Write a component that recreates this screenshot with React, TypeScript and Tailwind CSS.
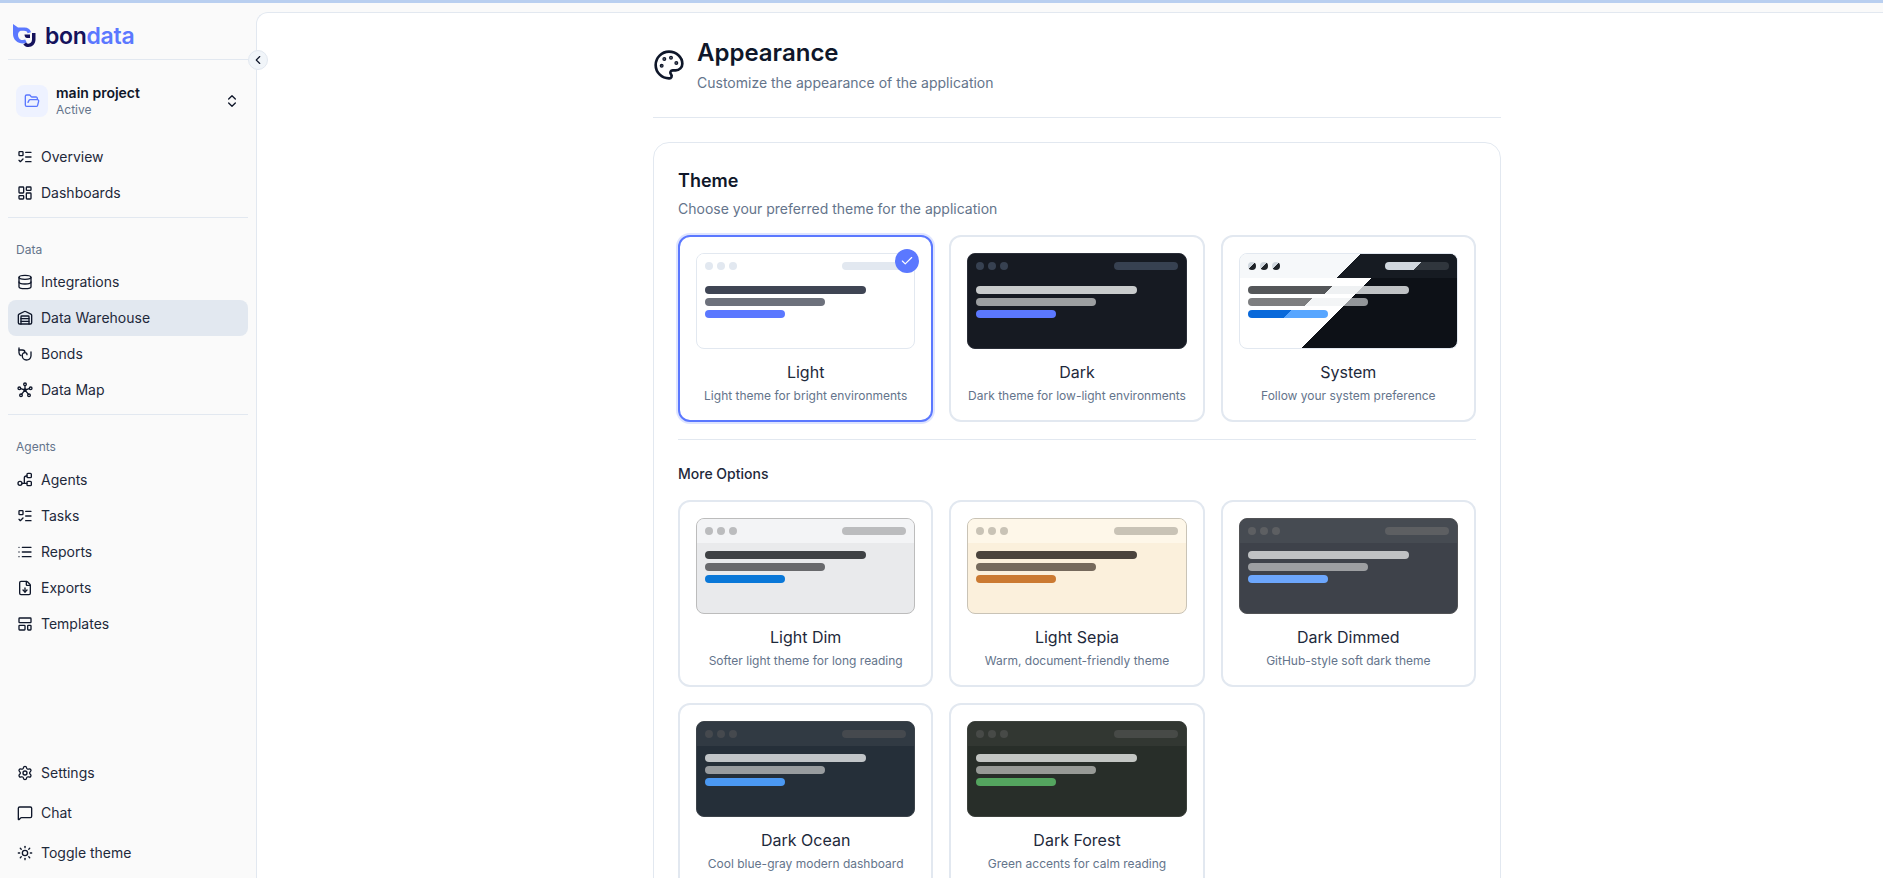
import {
  Check,
  ChevronLeft,
  ChevronsUpDown,
  Database,
  FileDown,
  FolderOpen,
  LayoutDashboard,
  LayoutTemplate,
  List,
  ListTodo,
  MessageSquare,
  Palette,
  Settings,
  Sun,
  Warehouse,
} from "lucide-react";
import type { ComponentType, ReactNode } from "react";

type IconProps = { size?: number; strokeWidth?: number; className?: string };

function BondsIcon({ size = 16, strokeWidth = 2 }: IconProps) {
  return (
    <svg width={size} height={size} viewBox="0 0 24 24" fill="none" stroke="currentColor" strokeWidth={strokeWidth} strokeLinecap="round" strokeLinejoin="round">
      <path d="M3 3v7a5 5 0 0 0 3 4.5" />
      <path d="M3 6h5a4 4 0 0 1 4 4" />
      <path d="M21 9v6a7 7 0 0 1-7 6 6 6 0 0 1-6-6 4 4 0 0 1 4-5c2 0 3 1 3 3" />
    </svg>
  );
}

function DataMapIcon({ size = 16, strokeWidth = 2 }: IconProps) {
  return (
    <svg width={size} height={size} viewBox="0 0 24 24" fill="none" stroke="currentColor" strokeWidth={strokeWidth} strokeLinecap="round">
      <circle cx="12" cy="3.5" r="2" />
      <circle cx="3.5" cy="9.5" r="2" />
      <circle cx="20.5" cy="9.5" r="2" />
      <circle cx="6" cy="20" r="2" />
      <circle cx="18" cy="20" r="2" />
      <circle cx="12" cy="12" r="1.5" fill="currentColor" />
      <path d="M12 5.5V12M5.5 10l6.5 2 6.5-2M7 18.3l5-6.3 5 6.3" />
    </svg>
  );
}

function AgentsIcon({ size = 16, strokeWidth = 2 }: IconProps) {
  return (
    <svg width={size} height={size} viewBox="0 0 24 24" fill="none" stroke="currentColor" strokeWidth={strokeWidth} strokeLinecap="round" strokeLinejoin="round">
      <circle cx="4.5" cy="17" r="3" />
      <rect x="15" y="2" width="6.5" height="6.5" rx="1.5" />
      <rect x="15" y="14" width="6.5" height="6.5" rx="1.5" />
      <path d="M7.5 17H15M11 17v-8a3 3 0 0 1 3-3h1" />
    </svg>
  );
}

function Logo() {
  return (
    <svg width="24" height="24" viewBox="0 0 24 24" fill="none">
      <path d="M0 0l5 3.6h6.5c3.4 0 5.5 1.6 6.5 4.6l-3.4 1C14 7.600 13 6.800 11 6.800H7.500a5 5 0 0 0 2.500 9.300c.8 0 1.500-.2 2.200-.5l1.500 3c-1.200.6-2.400.9-3.700.9C4.400 19.500 0 15.600 0 10z" fill="#5b78ff" />
      <path d="M22.500 9v6.500c0 4.500-3.200 7.500-7 7.500-2 0-4-.9-5.200-2.600l2.800-1.900c.6.800 1.400 1.200 2.400 1.200 1.900 0 3.500-1.600 3.500-4.100V9z" fill="#15125c" />
      <path d="M11.500 10.500h5.500v3.400h-3c-1.500 0-2.500-1.400-2.500-3.400z" fill="#15125c" />
    </svg>
  );
}

function NavItem({ icon: Icon, label, active }: { icon: ComponentType<IconProps>; label: string; active?: boolean }) {
  return (
    <div className={`flex h-9 items-center gap-[8px] rounded-lg px-[9px] text-sm text-[#1e293b] ${active ? "bg-[#e2e8f0]" : ""}`}>
      <span className="text-[#0f172a]">
        <Icon size={16} strokeWidth={2} />
      </span>
      <span>{label}</span>
    </div>
  );
}

function NavLabel({ children }: { children: ReactNode }) {
  return <div className="flex h-5 items-center px-2 text-xs text-[#64748b]">{children}</div>;
}

function Sidebar() {
  return (
    <aside className="flex h-full w-[256px] shrink-0 flex-col bg-[#fafafa] px-2">
      <div className="flex h-[57px] shrink-0 items-start gap-[8px] border-b border-[#e2e8f0] pl-[5px] pt-[21px]">
        <Logo />
        <span className="text-[23px] font-semibold leading-[24px] tracking-[-0.3px] text-[#15125c]">
          bon<span className="text-[#5b78ff]">data</span>
        </span>
      </div>
      <div className="mt-[24px] flex items-center px-2">
        <div className="flex size-8 items-center justify-center rounded-lg bg-[#eef2ff] text-[#5b78ff]">
          <FolderOpen size={16} />
        </div>
        <div className="ml-2 flex-1">
          <div className="text-[14px] font-semibold leading-[18px] text-[#0f172a]">main project</div>
          <div className="text-xs leading-[16px] text-[#64748b]">Active</div>
        </div>
        <ChevronsUpDown size={16} className="mr-0 text-[#0f172a]" />
      </div>
      <nav className="mt-[21px] flex flex-col">
        <NavItem icon={ListTodo} label="Overview" />
        <NavItem icon={LayoutDashboard} label="Dashboards" />
        <div className="mt-[6px] border-t border-[#e2e8f0]" />
        <div className="mt-[22px] flex flex-col">
          <NavLabel>Data</NavLabel>
          <div className="mt-1 flex flex-col">
            <NavItem icon={Database} label="Integrations" />
            <NavItem icon={Warehouse} label="Data Warehouse" active />
            <NavItem icon={BondsIcon} label="Bonds" />
            <NavItem icon={DataMapIcon} label="Data Map" />
          </div>
        </div>
        <div className="mt-[6px] border-t border-[#e2e8f0]" />
        <div className="mt-[22px] flex flex-col">
          <NavLabel>Agents</NavLabel>
          <div className="mt-[5px] flex flex-col">
            <NavItem icon={AgentsIcon} label="Agents" />
            <NavItem icon={ListTodo} label="Tasks" />
            <NavItem icon={List} label="Reports" />
            <NavItem icon={FileDown} label="Exports" />
            <NavItem icon={LayoutTemplate} label="Templates" />
          </div>
        </div>
      </nav>
      <div className="mt-auto mb-[7px] flex flex-col gap-1">
        <NavItem icon={Settings} label="Settings" />
        <NavItem icon={MessageSquare} label="Chat" />
        <NavItem icon={Sun} label="Toggle theme" />
      </div>
    </aside>
  );
}

type Skin = {
  frame: string;
  head: string;
  dot: string;
  pill: string;
  line1: string;
  line2: string;
  accent: string;
};

const skins: Record<string, Skin> = {
  light: { frame: "border-[#e2e8f0] bg-white", head: "bg-white", dot: "bg-[#e2e8f0]", pill: "bg-[#e2e8f0]", line1: "bg-[#3f4554]", line2: "bg-[#6d717c]", accent: "bg-[#5b78ff]" },
  dark: { frame: "border-[#2a2e38] bg-[#161a22]", head: "bg-[#161a22]", dot: "bg-[#374151]", pill: "bg-[#374151]", line1: "bg-[#c8cbcc]", line2: "bg-[#9c9fa1]", accent: "bg-[#5b78ff]" },
  system: {
    frame: "border-[#e2e8f0] bg-[linear-gradient(135deg,#ffffff_50%,#0d1117_50%)]",
    head: "bg-[linear-gradient(135deg,#f6f8fa_50%,#161b22_50%)]",
    dot: "bg-[linear-gradient(135deg,#d0d7de_50%,#1f2328_50%)]",
    pill: "bg-[linear-gradient(135deg,#d0d7de_50%,#30363d_50%)]",
    line1: "bg-[linear-gradient(135deg,#2a2d30_50%,#ebeef0_50%)] opacity-80",
    line2: "bg-[linear-gradient(135deg,#26282b_50%,#ebeef0_50%)] opacity-60",
    accent: "bg-[linear-gradient(135deg,#0969da_50%,#58a6ff_50%)]",
  },
  lightDim: { frame: "border-[#bcbcbc] bg-[#e9eaec]", head: "bg-[#f3f4f6]", dot: "bg-[#bbbcbe]", pill: "bg-[#bbbcbe]", line1: "bg-[#3e4144]", line2: "bg-[#68696c]", accent: "bg-[#0a78d8]" },
  sepia: { frame: "border-[#c9c3b6] bg-[#fbf0dc]", head: "bg-[#fef7e9]", dot: "bg-[#c9c3b6]", pill: "bg-[#c9c3b6]", line1: "bg-[#4a433c]", line2: "bg-[#75695c]", accent: "bg-[#cb7a32]" },
  dimmed: { frame: "border-[#525356] bg-[#3e424a]", head: "bg-[#464b52]", dot: "bg-[#5d5f62]", pill: "bg-[#5d5f62]", line1: "bg-[#c0c2c4]", line2: "bg-[#9d9fa2]", accent: "bg-[#6ca6fc]" },
  ocean: { frame: "border-[#3c434a] bg-[#252f39]", head: "bg-[#313a43]", dot: "bg-[#45494e]", pill: "bg-[#45494e]", line1: "bg-[#c1c5c8]", line2: "bg-[#989c9f]", accent: "bg-[#4b99f3]" },
  forest: { frame: "border-[#3d423d] bg-[#282e29]", head: "bg-[#323732]", dot: "bg-[#474a47]", pill: "bg-[#474a47]", line1: "bg-[#c3c6c3]", line2: "bg-[#979a96]", accent: "bg-[#54a55f]" },
};

function Preview({ skin }: { skin: Skin }) {
  return (
    <div className={`h-24 overflow-hidden rounded-lg border ${skin.frame}`}>
      <div className={`flex h-6 items-center justify-between px-2 ${skin.head}`}>
        <div className="flex gap-1">
          <span className={`size-2 rounded-full ${skin.dot}`} />
          <span className={`size-2 rounded-full ${skin.dot}`} />
          <span className={`size-2 rounded-full ${skin.dot}`} />
        </div>
        <span className={`h-2 w-16 rounded-full ${skin.pill}`} />
      </div>
      <div className="flex flex-col gap-1 px-2 pt-2">
        <span className={`h-2 w-[161px] rounded-full ${skin.line1}`} />
        <span className={`h-2 w-[120px] rounded-full ${skin.line2}`} />
        <span className={`h-2 w-20 rounded-full ${skin.accent}`} />
      </div>
    </div>
  );
}

function ThemeCard({ skin, name, desc, selected }: { skin: Skin; name: string; desc: string; selected?: boolean }) {
  return (
    <div className={`relative rounded-xl border-2 bg-white p-4 text-center ${selected ? "border-[#5b78ff] shadow-[0_0_0_2px_#5b78ff33]" : "border-[#e2e8f0]"}`}>
      <Preview skin={skin} />
      {selected && (
        <span className="absolute right-3 top-3 flex size-6 items-center justify-center rounded-full bg-[#5b78ff] text-white">
          <Check size={14} strokeWidth={2} />
        </span>
      )}
      <div className="mt-[11px] text-base font-normal text-[#1e293b]">{name}</div>
      <div className="mt-1 text-xs text-[#64748b]">{desc}</div>
    </div>
  );
}

export default function App() {
  return (
    <div className="h-[878px] w-full overflow-hidden bg-[#fafafa] font-['Inter',sans-serif]">
      <div className="h-[3px] bg-[#b9cff0]" />
      <div className="relative flex h-[875px]">
        <Sidebar />
        <button className="absolute left-[248px] top-[47px] z-10 flex size-5 items-center justify-center rounded-full border border-[#e2e8f0] bg-[#f1f5f9] text-[#0f172a]">
          <ChevronLeft size={14} />
        </button>
        <main className="mt-[9px] flex-1 overflow-hidden rounded-tl-xl border-l border-t border-[#e2e8f0] bg-white pl-[396px] pt-6">
          <div className="w-[848px]">
            <header className="flex items-center gap-3 border-b border-[#e2e8f0] pb-6">
              <Palette size={32} strokeWidth={2} className="text-[#0f172a]" />
              <div>
                <h1 className="text-2xl font-semibold leading-8 text-[#0f172a]">Appearance</h1>
                <p className="mt-1 text-sm text-[#64748b]">Customize the appearance of the application</p>
              </div>
            </header>
            <section className="mt-6 rounded-2xl border border-[#e2e8f0] bg-white p-6">
              <h2 className="text-lg font-semibold text-[#0f172a]">Theme</h2>
              <p className="mb-4 mt-1 text-sm text-[#64748b]">Choose your preferred theme for the application</p>
              <div className="grid grid-cols-3 gap-4">
                <ThemeCard skin={skins.light} name="Light" desc="Light theme for bright environments" selected />
                <ThemeCard skin={skins.dark} name="Dark" desc="Dark theme for low-light environments" />
                <ThemeCard skin={skins.system} name="System" desc="Follow your system preference" />
              </div>
              <div className="mt-[17px] border-t border-[#e2e8f0] pt-6">
                <p className="mb-4 text-sm font-medium text-[#1e293b]">More Options</p>
                <div className="grid grid-cols-3 gap-4">
                  <ThemeCard skin={skins.lightDim} name="Light Dim" desc="Softer light theme for long reading" />
                  <ThemeCard skin={skins.sepia} name="Light Sepia" desc="Warm, document-friendly theme" />
                  <ThemeCard skin={skins.dimmed} name="Dark Dimmed" desc="GitHub-style soft dark theme" />
                  <ThemeCard skin={skins.ocean} name="Dark Ocean" desc="Cool blue-gray modern dashboard" />
                  <ThemeCard skin={skins.forest} name="Dark Forest" desc="Green accents for calm reading" />
                </div>
              </div>
            </section>
          </div>
        </main>
      </div>
    </div>
  );
}
